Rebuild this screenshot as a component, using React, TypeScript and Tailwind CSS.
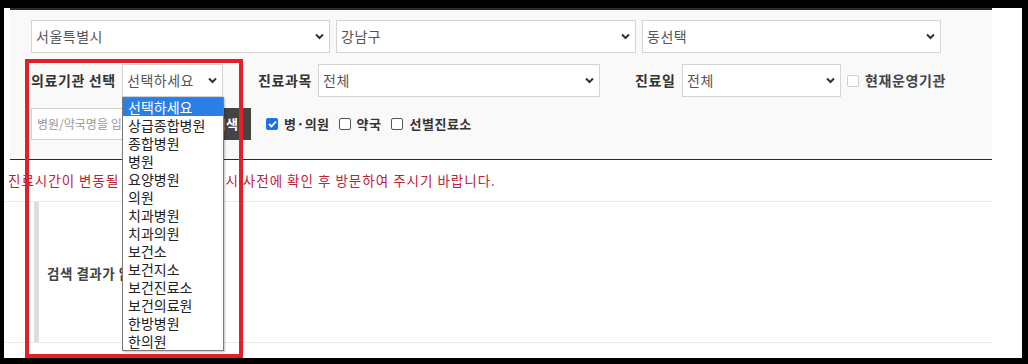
import React from 'react';

const font = { fontFamily: '"Noto Sans CJK KR", "Noto Sans", sans-serif' };

const Chevron = () => (
  <svg width="9" height="7" viewBox="0 0 9 7" className="shrink-0">
    <path d="M1 1.5 L4.5 5 L8 1.5" fill="none" stroke="#333" strokeWidth="2" />
  </svg>
);

const FakeSelect = ({ value, className }: { value: string; className: string }) => (
  <div
    className={`flex items-center justify-between h-[33px] bg-white border border-[#d4d4d4] pl-[4px] pr-[5px] text-[14px] tracking-[0.5px] text-[#555] ${className}`}
  >
    <span>{value}</span>
    <Chevron />
  </div>
);

const Box = ({ checked, disabled }: { checked?: boolean; disabled?: boolean }) =>
  checked ? (
    <span className="w-[12px] h-[12px] rounded-[2px] bg-[#1a73e8] flex items-center justify-center shrink-0">
      <svg width="9" height="8" viewBox="0 0 9 8">
        <path d="M1 4 L3.5 6.5 L8 1.5" fill="none" stroke="#fff" strokeWidth="1.8" />
      </svg>
    </span>
  ) : (
    <span
      className={`block w-[12px] h-[12px] rounded-[2px] border shrink-0 bg-white ${
        disabled ? 'border-[#cfcfcf]' : 'border-[#555]'
      }`}
    />
  );

const options = [
  '선택하세요',
  '상급종합병원',
  '종합병원',
  '병원',
  '요양병원',
  '의원',
  '치과병원',
  '치과의원',
  '보건소',
  '보건지소',
  '보건진료소',
  '보건의료원',
  '한방병원',
  '한의원',
];

export default function App() {
  return (
    <div className="relative w-[1028px] h-[364px] bg-black overflow-hidden" style={font}>
      <div className="absolute left-[4px] top-[8px] w-[1018px] h-[350px] bg-white">
        <div className="w-[988px]">
          {/* filter panel */}
          <div className="ml-[6px] w-[982px] bg-[#f9f9f9] border-t-2 border-b border-[#2b2b2b] pt-[10px] pb-[19px] pl-[21px]">
            <div className="flex gap-[6px]">
              <FakeSelect value="서울특별시" className="w-[299px]" />
              <FakeSelect value="강남구" className="w-[300px]" />
              <FakeSelect value="동선택" className="w-[299px]" />
            </div>

            <div className="flex items-center mt-[11px] text-[14px] tracking-[0.6px]">
              <span className="font-bold text-[#333] w-[91px]">의료기관 선택</span>
              <FakeSelect value="선택하세요" className="w-[101px] text-[#333]" />
              <span className="font-bold text-[#333] ml-[35px] w-[60px]">진료과목</span>
              <FakeSelect value="전체" className="w-[282px]" />
              <span className="font-bold text-[#333] ml-[35px] w-[47px]">진료일</span>
              <FakeSelect value="전체" className="w-[159px]" />
              <span className="ml-[6px]">
                <Box disabled />
              </span>
              <span className="font-bold text-[#444] ml-[6px]">현재운영기관</span>
            </div>

            <div className="flex items-center mt-[11px] text-[13px] tracking-[0.5px]">
              <div className="w-[170px] h-[32px] bg-white border border-[#d4d4d4] flex items-center pl-[5px] text-[12px] tracking-normal text-[#999]">
                병원/약국명을 입력하세요
              </div>
              <div className="w-[50px] h-[32px] bg-[#444] text-white font-bold flex items-center justify-center">
                검색
              </div>
              <span className="ml-[15px]">
                <Box checked />
              </span>
              <span className="font-bold text-[#333] ml-[6px]">병·의원</span>
              <span className="ml-[9px]">
                <Box />
              </span>
              <span className="font-bold text-[#333] ml-[6px]">약국</span>
              <span className="ml-[9px]">
                <Box />
              </span>
              <span className="font-bold text-[#333] ml-[7px]">선별진료소</span>
            </div>
          </div>

          <p className="pl-[4px] h-[41px] flex items-center text-[13.5px] text-[#c0203a] tracking-[1px]">
            진료시간이 변동될 수 있으므로 반드시 사전에 확인 후 방문하여 주시기 바랍니다.
          </p>

          <div className="border-t border-b border-[#ebebeb] h-[142px] pl-[30px]">
            <div className="h-full border-l-[5px] border-[#dedede] flex items-center pl-[8px] pt-[2px]">
              <span className="text-[13.5px] tracking-[0.5px] font-bold text-[#444]">검색 결과가 없습니다.</span>
            </div>
          </div>
        </div>
      </div>

      {/* open dropdown list */}
      <ul className="absolute left-[122px] top-[97px] w-[102px] bg-white border border-[#7a7a7a] shadow-[1px_1px_2px_rgba(0,0,0,0.25)] text-[14px] text-[#222]">
        {options.map((o, i) => (
          <li
            key={o}
            className={`h-[18px] leading-[18px] pl-[5px] ${i === 0 ? 'bg-[#2a7fe6] text-white' : ''}`}
          >
            {o}
          </li>
        ))}
      </ul>

      {/* red highlight frame */}
      <div className="absolute left-[25px] top-[59px] w-[218px] h-[299px] border-4 border-[#e3202a]" />
    </div>
  );
}
